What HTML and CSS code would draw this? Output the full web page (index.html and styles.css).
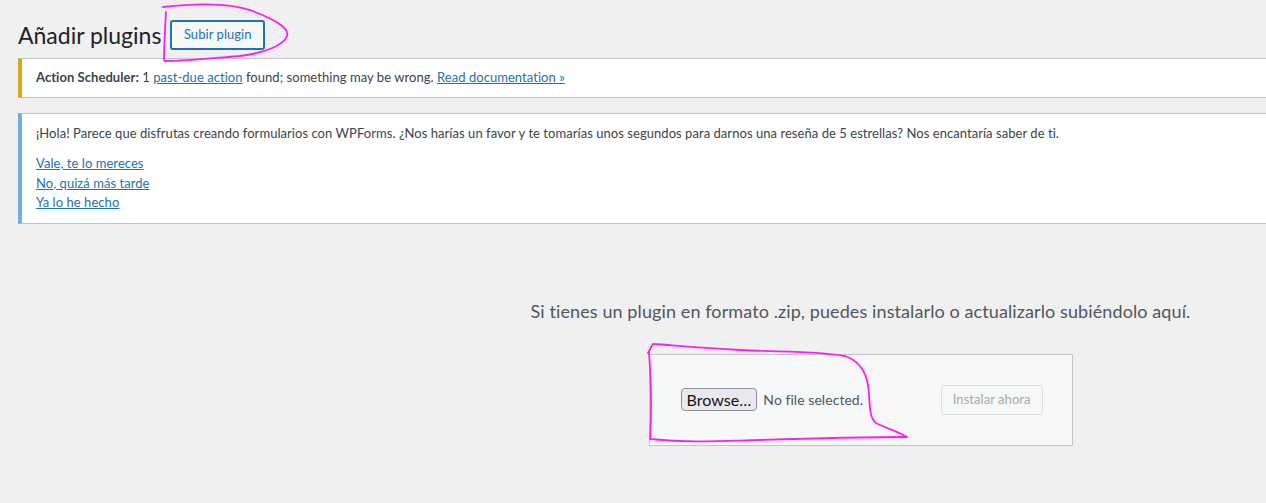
FILE: index.html
```html
<!DOCTYPE html>
<html lang="es">
<head>
<meta charset="utf-8">
<title>Añadir plugins</title>
<link rel="stylesheet" href="styles.css">
</head>
<body>
<div class="wrap">
  <div class="page-header">
    <h1 class="page-title">Añadir plugins</h1>
    <a class="title-action" href="#">Subir plugin</a>
  </div>

  <div class="notice notice-warning">
    <p><strong>Action Scheduler:</strong> 1 <a href="#">past-due action</a> found; something may be wrong. <a href="#">Read documentation »</a></p>
  </div>

  <div class="notice notice-info">
    <p>¡Hola! Parece que disfrutas creando formularios con WPForms. ¿Nos harías un favor y te tomarías unos segundos para darnos una reseña de 5 estrellas? Nos encantaría saber de ti.</p>
    <p><a href="#">Vale, te lo mereces</a><br><a href="#">No, quizá más tarde</a><br><a href="#">Ya lo he hecho</a></p>
  </div>

  <div class="upload-plugin">
    <p class="install-help">Si tienes un plugin en formato .zip, puedes instalarlo o actualizarlo subiéndolo aquí.</p>
    <form class="upload-form">
      <div class="file-field">
        <span class="browse-btn">Browse…</span>
        <span class="file-name">No file selected.</span>
      </div>
      <span class="install-btn">Instalar ahora</span>
    </form>
  </div>
</div>

<svg class="annotations" width="1266" height="503" viewBox="0 0 1266 503">
  <path d="M163,7 C190,4 230,2 255,12 C275,20 290,28 287,36 C284,45 265,53 240,56 C215,58 185,61 165,61 M166,12 C165,30 164,45 164,60" />
  <path d="M648,353 L653,344 C670,345 700,348 740,350 C780,352 820,351 845,356 C862,362 868,375 869,395 C870,410 870,418 876,423 C885,428 895,430 907,437 C880,437 820,438 760,440 C720,441 690,443 650,439 M649,352 C651,380 652,410 650,439" />
</svg>
</body>
</html>
```

FILE: styles.css
```css
html, body {
  margin: 0;
  padding: 0;
}

body {
  background: #f0f0f1;
  color: #3c434a;
  font-family: "Lato", "Noto Sans", sans-serif;
  font-size: 13px;
  line-height: 1.5;
  letter-spacing: 0.05px;
  overflow: hidden;
  width: 1266px;
  height: 503px;
  position: relative;
}

a {
  color: #2271b1;
  text-decoration: underline;
}

.wrap {
  margin-left: 18px;
  width: 1685px;
}

.page-header {
  display: flex;
  align-items: center;
  gap: 9px;
  padding-top: 20px;
}

.page-title {
  margin: 0;
  font-size: 23px;
  font-weight: 400;
  line-height: 30px;
  letter-spacing: 0;
  color: #1d2327;
}

.title-action {
  display: inline-flex;
  align-items: center;
  box-sizing: border-box;
  height: 30px;
  padding: 0 11.5px;
  border: 2px solid #2271b1;
  border-radius: 3px;
  background: #f6f7f7;
  color: #2271b1;
  text-decoration: none;
  font-size: 13px;
}

.notice {
  background: #fff;
  border: 1px solid #c3c4c7;
  border-left-width: 4px;
  padding: 1px 12px;
  margin: 8px 0 15px;
}

.notice p {
  margin: 6px 0;
  padding: 2px;
}

.notice-warning {
  border-left-color: #dba617;
}

.notice-info {
  border-left-color: #72aee6;
  margin-top: 0;
}

.notice-info p {
  margin: 7px 0;
}

.upload-plugin {
  text-align: center;
  padding-top: 59px;
}

.install-help {
  margin: 0;
  font-size: 18px;
  line-height: 27px;
  letter-spacing: 0.1px;
  color: #50575e;
}

.upload-form {
  display: inline-flex;
  justify-content: space-between;
  align-items: center;
  box-sizing: border-box;
  width: 424px;
  margin-top: 29px;
  padding: 30px 29px 30px 31px;
  background: #f6f7f7;
  border: 1px solid #c3c4c7;
}

.file-field {
  display: flex;
  align-items: center;
  gap: 6px;
}

.browse-btn {
  display: inline-block;
  box-sizing: border-box;
  height: 23px;
  padding: 0 5px;
  line-height: 21px;
  font-size: 16px;
  color: #15141a;
  background: #e9e9ed;
  border: 1px solid #8f8f9d;
  border-radius: 4px;
}

.file-name {
  font-size: 14px;
  color: #50575e;
}

.install-btn {
  display: inline-flex;
  align-items: center;
  box-sizing: border-box;
  height: 30px;
  padding: 0 11px;
  font-size: 13px;
  color: #a7aaad;
  background: #f6f7f7;
  border: 1px solid #dcdcde;
  border-radius: 3px;
}

.annotations {
  position: absolute;
  top: 0;
  left: 0;
  pointer-events: none;
  fill: none;
  stroke: #ff1ef0;
  stroke-width: 1.8;
  stroke-linecap: round;
  stroke-linejoin: round;
}
```
